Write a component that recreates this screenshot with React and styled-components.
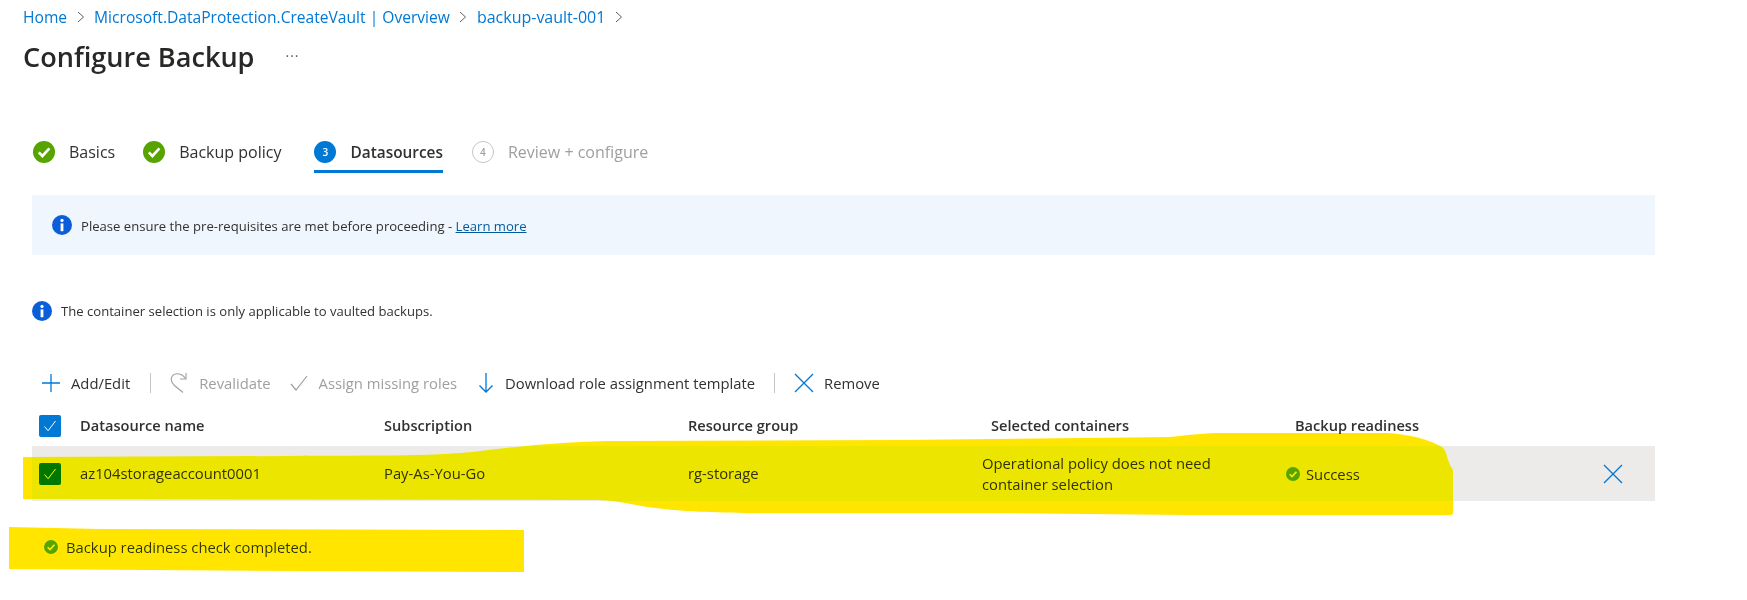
import React from "react";
import styled, { createGlobalStyle } from "styled-components";

const BLUE = "#0078d4";
const FONT = `"Open Sans", "Noto Sans", sans-serif`;

const GlobalStyle = createGlobalStyle`
  html, body {
    margin: 0;
    padding: 0;
    background: #fff;
  }
  body {
    font-family: ${FONT};
    color: #292827;
  }
`;

function CheckCircle({ size = 22 }) {
  return (
    <svg width={size} height={size} viewBox="0 0 22 22" style={{ flexShrink: 0 }}>
      <circle cx="11" cy="11" r="11" fill="#57a300" />
      <path d="M5.8 11.4l3.6 3.6 7-7.6" fill="none" stroke="#fff" strokeWidth="2.6" />
    </svg>
  );
}

function InfoCircle() {
  return (
    <svg width="20" height="20" viewBox="0 0 20 20" style={{ flexShrink: 0 }}>
      <circle cx="10" cy="10" r="10" fill="#0a5fd8" />
      <circle cx="10" cy="5.4" r="1.6" fill="#fff" />
      <rect x="8.6" y="8.4" width="2.8" height="7.8" fill="#fff" />
    </svg>
  );
}

function TickMark({ color = "#fff" }) {
  return (
    <svg width="14" height="14" viewBox="0 0 14 14">
      <path d="M1.5 7.5l3.6 4.2L12.5 2" fill="none" stroke={color} strokeWidth="1" />
    </svg>
  );
}

function CrossIcon() {
  return (
    <svg width="20" height="20" viewBox="0 0 20 20">
      <path d="M1 1l18 18M19 1L1 19" fill="none" stroke={BLUE} strokeWidth="1.3" />
    </svg>
  );
}

const Page = styled.div`
  position: relative;
  width: 1747px;
  height: 600px;
  overflow: hidden;
  padding: 5px 92px 0 32px;
  box-sizing: border-box;
`;

const Breadcrumb = styled.nav`
  display: flex;
  align-items: center;
  height: 24px;
  margin-left: -9px;
  font-size: 15.6px;
  color: ${BLUE};
`;

const Crumb = styled.span`
  font-size: ${(p) => p.$size || 15.6}px;
  white-space: nowrap;
`;

const Chevron = styled.svg`
  width: 8px;
  height: 12px;
  margin: 0 9.500px;
`;

const TitleRow = styled.div`
  display: flex;
  align-items: center;
  height: 40px;
  margin: 7px 0 0 -9px;
`;

const Title = styled.h1`
  margin: 0;
  font-size: 27.1px;
  font-weight: 600;
  color: #292827;
`;

const More = styled.span`
  margin: -2px 0 0 31px;
  font-size: 14px;
  letter-spacing: 1px;
  color: #605e5c;
`;

const Stepper = styled.div`
  display: flex;
  margin-top: 59px;
  padding-left: 1px;
`;

const Step = styled.div`
  display: flex;
  align-items: center;
  gap: 14px;
  height: 38px;
  padding-bottom: 4px;
  box-sizing: border-box;
  margin-right: ${(p) => p.$gap}px;
  font-size: ${(p) => (p.$active ? 15.4 : 16)}px;
  font-weight: ${(p) => (p.$active ? 600 : 400)};
  color: ${(p) => (p.$disabled ? "#a19f9d" : "#323130")};
  box-shadow: ${(p) => (p.$active ? `inset 0 -3px 0 ${BLUE}` : "none")};
  white-space: nowrap;
`;

const StepNumber = styled.span`
  display: flex;
  align-items: center;
  justify-content: center;
  width: 22px;
  height: 22px;
  box-sizing: border-box;
  border-radius: 50%;
  font-size: 10px;
  font-weight: 600;
  color: ${(p) => (p.$active ? "#fff" : "#a19f9d")};
  background: ${(p) => (p.$active ? BLUE : "transparent")};
  border: ${(p) => (p.$active ? "none" : "1.5px solid #c8c6c4")};
`;

const Banner = styled.div`
  display: flex;
  align-items: center;
  gap: 9px;
  height: 60px;
  margin-top: 22px;
  padding-left: 20px;
  background: #eff6fe;
  font-size: 13.1px;
  color: #323130;
`;

const BannerText = styled.span`
  margin-top: 1px;
`;

const BannerLink = styled.a`
  color: #005a9e;
  text-decoration: underline;
`;

const Notice = styled.div`
  display: flex;
  align-items: center;
  gap: 9px;
  height: 20px;
  margin-top: 46px;
  font-size: 13.1px;
  color: #323130;
`;

const Toolbar = styled.div`
  display: flex;
  align-items: center;
  height: 24px;
  margin-top: 50px;
  padding-left: 10px;
`;

const ToolButton = styled.div`
  display: flex;
  align-items: center;
  gap: ${(p) => p.$iconGap || 11}px;
  margin-right: ${(p) => p.$gap}px;
  font-size: 14.8px;
  color: ${(p) => (p.$disabled ? "#a19f9d" : "#323130")};
  white-space: nowrap;
`;

const Divider = styled.span`
  width: 1px;
  height: 20px;
  margin-right: 19px;
  background: #c8c6c4;
`;

const Grid = styled.div`
  display: grid;
  grid-template-columns: 48px 304px 304px 294px 304px 200px 1fr;
  align-items: center;
  height: ${(p) => p.$height}px;
  margin-top: ${(p) => p.$top}px;
  background: ${(p) => p.$bg || "transparent"};
  font-size: ${(p) => (p.$head ? 14.6 : 14.8)}px;
  font-weight: ${(p) => (p.$head ? 600 : 400)};
  color: #323130;
`;

const Cell = styled.div`
  padding-left: ${(p) => p.$indent || 0}px;
  line-height: 21px;
`;

const Box = styled.span`
  display: flex;
  align-items: center;
  justify-content: center;
  width: 22px;
  height: 22px;
  margin-left: 7px;
  border-radius: 2px;
  background: ${(p) => p.$bg};
`;

const ReadyCell = styled.div`
  display: flex;
  align-items: center;
  gap: 6px;
`;

const RemoveCell = styled.div`
  display: flex;
  justify-content: flex-end;
  padding-right: 32px;
`;

const Status = styled.div`
  display: flex;
  align-items: center;
  gap: 8px;
  height: 24px;
  margin: 34px 0 0 12px;
  font-size: 14.8px;
  color: #323130;
`;

const Highlights = styled.svg`
  position: absolute;
  left: 0;
  top: 0;
  pointer-events: none;
  mix-blend-mode: darken;
`;

function Sep() {
  return (
    <Chevron viewBox="0 0 8 12">
      <path d="M1 1l5.5 5L1 11" fill="none" stroke="#605e5c" strokeWidth="1" />
    </Chevron>
  );
}

export default function App() {
  return (
    <Page>
      <GlobalStyle />
      <Breadcrumb>
        <Crumb>Home</Crumb>
        <Sep />
        <Crumb>Microsoft.DataProtection.CreateVault | Overview</Crumb>
        <Sep />
        <Crumb $size={16}>backup-vault-001</Crumb>
        <Sep />
      </Breadcrumb>
      <TitleRow>
        <Title>Configure Backup</Title>
        <More>···</More>
      </TitleRow>

      <Stepper>
        <Step $gap={28}>
          <CheckCircle />
          Basics
        </Step>
        <Step $gap={33}>
          <CheckCircle />
          Backup policy
        </Step>
        <Step $gap={29} $active>
          <StepNumber $active>3</StepNumber>
          Datasources
        </Step>
        <Step $gap={0} $disabled>
          <StepNumber>4</StepNumber>
          Review + configure
        </Step>
      </Stepper>

      <Banner>
        <InfoCircle />
        <BannerText>
          Please ensure the pre-requisites are met before proceeding - <BannerLink>Learn more</BannerLink>
        </BannerText>
      </Banner>

      <Notice>
        <InfoCircle />
        The container selection is only applicable to vaulted backups.
      </Notice>

      <Toolbar>
        <ToolButton $gap={20}>
          <svg width="18" height="18" viewBox="0 0 18 18">
            <path d="M9 0v18M0 9h18" fill="none" stroke={BLUE} strokeWidth="1.3" />
          </svg>
          Add/Edit
        </ToolButton>
        <Divider />
        <ToolButton $gap={19} $disabled>
          <svg width="18" height="22" viewBox="0 0 18 22">
            <path d="M15.500 6.500C12.500 1.500 5 0 2 4.500C0 8 1.500 10.500 5 14L13 20.500" fill="none" stroke="#a19f9d" strokeWidth="1.1" />
            <path d="M16 1v6h-6" fill="none" stroke="#a19f9d" strokeWidth="1.1" />
          </svg>
          Revalidate
        </ToolButton>
        <ToolButton $gap={21} $disabled>
          <svg width="18" height="16" viewBox="0 0 18 16">
            <path d="M1 9l5 6L17 1" fill="none" stroke="#a19f9d" strokeWidth="1.2" />
          </svg>
          Assign missing roles
        </ToolButton>
        <ToolButton $gap={19}>
          <svg width="16" height="20" viewBox="0 0 16 20">
            <path d="M8 0v19M1.500 12.500L8 19l6.500-6.500" fill="none" stroke={BLUE} strokeWidth="1.3" />
          </svg>
          Download role assignment template
        </ToolButton>
        <Divider />
        <ToolButton $gap={0} $iconGap={10}>
          <CrossIcon />
          Remove
        </ToolButton>
      </Toolbar>

      <Grid $head $height={25} $top={18}>
        <Box $bg={BLUE}>
          <TickMark />
        </Box>
        <Cell>Datasource name</Cell>
        <Cell>Subscription</Cell>
        <Cell>Resource group</Cell>
        <Cell $indent={9}>Selected containers</Cell>
        <Cell $indent={9}>Backup readiness</Cell>
        <Cell />
      </Grid>

      <Grid $height={55} $top={8} $bg="#ecebe9">
        <Box $bg={BLUE}>
          <TickMark />
        </Box>
        <Cell>az104storageaccount0001</Cell>
        <Cell>Pay-As-You-Go</Cell>
        <Cell>rg-storage</Cell>
        <Cell>
          Operational policy does not need
          <br />
          container selection
        </Cell>
        <ReadyCell>
          <CheckCircle size={14} />
          Success
        </ReadyCell>
        <RemoveCell>
          <CrossIcon />
        </RemoveCell>
      </Grid>

      <Status>
        <CheckCircle size={14} />
        Backup readiness check completed.
      </Status>

      <Highlights width="1747" height="600" viewBox="0 0 1747 600">
        <path
          fill="#ffe500"
          d="M23 457 L287 456 C380 455 440 457 488 450 C540 444 580 441 620 441 L900 440 L1170 437 C1190 435 1205 433 1224 433 L1386 433 C1410 434 1430 440 1442 447 C1448 452 1446 460 1453 470 L1453 513 Q1453 515 1450 515 L1186 515 L992 513 L746 513 C690 512 660 510 631 504 C610 500 600 500 591 500 L23 499 Z"
        />
        <path fill="#ffe500" d="M9 527 L100 529 L524 530 L524 572 L300 571 L9 569 Z" />
      </Highlights>
    </Page>
  );
}
